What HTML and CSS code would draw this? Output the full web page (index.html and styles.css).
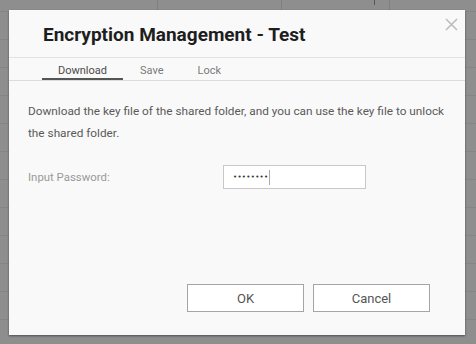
FILE: index.html
```html
<!DOCTYPE html>
<html>
<head>
<meta charset="utf-8">
<link rel="stylesheet" href="styles.css">
</head>
<body>
<div class="backdrop">
  <div class="bg-row bg-head">
    <div class="bg-cell c1"></div>
    <div class="bg-cell c2"></div>
    <div class="bg-cell c3"><span class="bg-tick"></span></div>
    <div class="bg-cell c4"></div>
  </div>
  <div class="bg-row"></div>
  <div class="bg-row"></div>
  <div class="bg-row"></div>
  <div class="bg-row"></div>
  <div class="bg-row"></div>
  <div class="bg-row"></div>
  <div class="bg-row"></div>
  <div class="bg-row"></div>
  <div class="bg-row"></div>
  <div class="bg-row"></div>
  <div class="bg-row"></div>
</div>

<div class="dialog">
  <button class="close" aria-label="Close">
    <svg width="13" height="13" viewBox="0 0 13 13"><path d="M1 1L12 12M12 1L1 12" stroke="#bdbdbd" stroke-width="1.6" fill="none"/></svg>
  </button>
  <div class="header">
    <h1 class="title">Encryption Management - Test</h1>
  </div>
  <div class="tabs">
    <div class="tab active">Download</div>
    <div class="tab">Save</div>
    <div class="tab">Lock</div>
  </div>
  <div class="content">
    <p class="desc">Download the key file of the shared folder, and you can use the key file to unlock the shared folder.</p>
    <div class="field">
      <label class="label">Input Password:</label>
      <div class="input"><span class="dots">••••••••</span><span class="caret"></span></div>
    </div>
  </div>
  <div class="footer">
    <button class="btn">OK</button>
    <button class="btn">Cancel</button>
  </div>
</div>
</body>
</html>
```
FILE: styles.css
```css
html, body {
  margin: 0;
  padding: 0;
}
body {
  width: 476px;
  height: 344px;
  overflow: hidden;
  background: #8e8e8e;
  font-family: Roboto, "Liberation Sans", sans-serif;
  position: relative;
}
.backdrop {
  display: flex;
  flex-direction: column;
  margin-top: -17px;
}
.bg-row {
  height: 27px;
  border-bottom: 1px solid #858585;
  display: flex;
}
.bg-head {
  height: 28px;
}
.bg-cell {
  border-right: 1px solid #808080;
  position: relative;
}
.c1 { width: 157px; }
.c2 { width: 123px; }
.c3 { width: 107px; }
.c4 { flex: 1; border-right: none; }
.bg-tick {
  position: absolute;
  right: 14px;
  top: 17px;
  width: 1px;
  height: 5px;
  background: #555;
}

.dialog {
  position: absolute;
  left: 9px;
  top: 10px;
  width: 456px;
  height: 325px;
  background: #f9f9f9;
  box-shadow: 0 1px 2px rgba(0,0,0,0.45);
  display: flex;
  flex-direction: column;
}
.close {
  position: absolute;
  right: 7px;
  top: 8px;
  width: 13px;
  height: 13px;
  padding: 0;
  border: none;
  background: none;
  display: flex;
}
.header {
  height: 48px;
  border-bottom: 1px solid #e3e3e3;
  padding-left: 34px;
  display: flex;
  align-items: center;
  box-sizing: border-box;
}
.title {
  margin: 0;
  font-size: 19px;
  font-weight: 700;
  color: #1e1e1e;
  line-height: 22px;
  padding-top: 3px;
}
.tabs {
  display: flex;
  padding-left: 33px;
  border-bottom: 1px solid #dcdcdc;
  height: 23px;
  box-sizing: border-box;
}
.tab {
  padding: 3px 17px 0;
  font-size: 11px;
  color: #7a7a7a;
  line-height: 19px;
  height: 22px;
  box-sizing: border-box;
}
.tab.active {
  width: 81px;
  text-align: center;
  color: #4a4a4a;
  border-bottom: 2px solid #555;
  padding: 3px 0 0;
}
.content {
  padding: 19px 19px 0 19px;
  flex: 1;
}
.desc {
  margin: 0;
  font-size: 11.8px;
  line-height: 22px;
  color: #5a5a5a;
}
.field {
  display: flex;
  align-items: center;
  margin-top: 21px;
}
.label {
  width: 195px;
  font-size: 11.4px;
  color: #9a9a9a;
}
.input {
  width: 143px;
  height: 24px;
  box-sizing: border-box;
  border: 1px solid #c8c8c8;
  background: #fff;
  display: flex;
  align-items: center;
  padding-left: 9px;
}
.dots {
  font-size: 7px;
  letter-spacing: 0.3px;
  color: #333;
  font-family: "DejaVu Sans", sans-serif;
}
.caret {
  width: 1px;
  height: 15px;
  background: #aaa;
  margin-left: 1px;
}
.footer {
  display: flex;
  justify-content: flex-end;
  gap: 9px;
  padding: 0 35px 23px 0;
}
.btn {
  width: 117px;
  height: 28px;
  box-sizing: border-box;
  border: 1px solid #a5a5a5;
  background: #fff;
  font-family: Roboto, "Liberation Sans", sans-serif;
  font-size: 13px;
  color: #555;
  padding: 0;
}
```
